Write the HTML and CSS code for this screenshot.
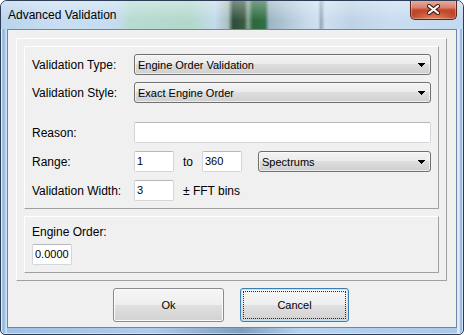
FILE: index.html
```html
<!DOCTYPE html>
<html lang="en">
<head>
    <meta charset="UTF-8">
    <meta name="viewport" content="width=device-width, initial-scale=1.0">
    <title>Advanced Validation</title>
    <link rel="stylesheet" href="styles.css">
</head>
<body>

    <div class="window">
        <div class="titlebar">
            <span class="title">Advanced Validation</span>
            <span class="close">
                <svg width="13" height="11" viewBox="0 0 13 11">
                    <path d="M2 2 L11 9 M11 2 L2 9" stroke="#4a2018" stroke-width="4.2" stroke-linecap="round"/>
                    <path d="M2 2 L11 9 M11 2 L2 9" stroke="#ffffff" stroke-width="2.2" stroke-linecap="round"/>
                </svg>
            </span>
        </div>

        <div class="client">
            <div class="panel">
                <div class="group">
                    <div class="row">
                        <span class="label">Validation Type:</span>
                        <span class="combo"><span class="value">Engine Order Validation</span><svg class="arrow" width="7" height="4" viewBox="0 0 7 4"><path d="M0 0h7v1h-1v1h-1v1h-1v1h-1v-1h-1v-1h-1v-1h-1z"/></svg></span>
                    </div>
                    <div class="row near">
                        <span class="label">Validation Style:</span>
                        <span class="combo"><span class="value">Exact Engine Order</span><svg class="arrow" width="7" height="4" viewBox="0 0 7 4"><path d="M0 0h7v1h-1v1h-1v1h-1v1h-1v-1h-1v-1h-1v-1h-1z"/></svg></span>
                    </div>
                    <div class="row far">
                        <span class="label">Reason:</span>
                        <span class="edit wide"></span>
                    </div>
                    <div class="row">
                        <span class="label">Range:</span>
                        <span class="edit">1</span>
                        <span class="to">to</span>
                        <span class="edit">360</span>
                        <span class="combo spectrums"><span class="value">Spectrums</span><svg class="arrow" width="7" height="4" viewBox="0 0 7 4"><path d="M0 0h7v1h-1v1h-1v1h-1v1h-1v-1h-1v-1h-1v-1h-1z"/></svg></span>
                    </div>
                    <div class="row">
                        <span class="label">Validation Width:</span>
                        <span class="edit">3</span>
                        <span class="unit">± FFT bins</span>
                    </div>
                </div>

                <div class="group order">
                    <div class="caption">Engine Order:</div>
                    <span class="edit">0.0000</span>
                </div>
            </div>

            <div class="buttons">
                <button class="btn ok">Ok</button>
                <button class="btn cancel">Cancel</button>
            </div>
        </div>
    </div>

</body>
</html>
```

FILE: styles.css
```css
body {
    margin: 0;
    background: #ffffff;
    font-family: "Liberation Sans", Arial, sans-serif;
}
.window {
    width: 464px;
    height: 335px;
    box-sizing: border-box;
    border: 1px solid #2c3d55;
    border-radius: 7px 7px 5px 5px;
    overflow: hidden;
    display: flex;
    flex-direction: column;
    background:
        linear-gradient(to right, #dbe9f7 0, #8fb5df 2px, #a6c6ea 4px, #d3e4f5 5px, #c3daf1 6px,
            transparent 6px, transparent calc(100% - 6px),
            #d8e7f6 calc(100% - 6px), #e6eff9 calc(100% - 4px), #8ab2e2 calc(100% - 2px), #b8d2ef 100%),
        linear-gradient(to right, #9fc1e6 0, #aecbeb 150px, #7f9fc0 240px, #b7d2ee 300px, #a9c8ea 100%);
    box-shadow: inset 0 0 0 1px rgba(255, 255, 255, 0.45);
}
.titlebar {
    height: 28px;
    flex: none;
    display: flex;
    align-items: center;
    padding-left: 7px;
    background:
        linear-gradient(to bottom, rgba(255, 255, 255, 0.35), rgba(255, 255, 255, 0) 70%),
        linear-gradient(to right, #b9d4ee 0, #c9def2 60px, #c5dcf0 115px, #b6dbd2 130px,
            #b2d8cc 190px, #c3dbec 214px, #a9bfc0 227px, #2f4e3a 232px, #3b5a44 243px,
            #88a697 247px, #2c693d 252px, #307044 264px, #9bb4c4 268px, #b7cbdc 290px,
            #c6d9ea 305px, #cfe0f0 317px, #97a8b8 320px, #cde0f0 324px, #bed3e6 350px,
            #c9ddf0 390px, #c3d9ef 100%);
}
.title {
    font-size: 12px;
    color: #000000;
    padding-bottom: 1px;
}
.close {
    margin-left: auto;
    margin-right: 6px;
    margin-top: -1px;
    align-self: flex-start;
    width: 47px;
    height: 20px;
    box-sizing: border-box;
    border: 1px solid #5b2419;
    border-top: none;
    border-radius: 0 0 5px 5px;
    display: flex;
    align-items: center;
    justify-content: center;
    background:
        radial-gradient(ellipse 60% 45% at 50% 100%, rgba(255, 170, 120, 0.7), rgba(255, 170, 120, 0)),
        linear-gradient(to bottom, #e9b1a4 0, #d9806f 40%, #c5492f 52%, #b3391f 100%);
    box-shadow: inset 0 0 0 1px rgba(255, 255, 255, 0.3);
}
.client {
    flex: 1;
    margin: 0 6px 6px;
    border: 1px solid #6f86a3;
    background: #f0f0f0;
}
.panel {
    margin: 8px 9px 0 8px;
    padding: 7px;
    border: 1px solid;
    border-color: #ffffff #a0a0a0 #a0a0a0 #ffffff;
}
.group {
    padding: 7px;
    border: 1px solid;
    border-color: #ffffff #a0a0a0 #a0a0a0 #ffffff;
}
.group.order {
    margin-top: 7px;
}
.row {
    display: flex;
    align-items: center;
    height: 21px;
    margin-top: 8px;
}
.row:first-child {
    margin-top: 0;
}
.row.near {
    margin-top: 7px;
}
.row.far {
    margin-top: 19px;
}
.label,
.to,
.unit,
.caption {
    font-size: 12px;
    color: #000000;
}
.label {
    width: 102px;
    flex: none;
}
.to {
    width: 28px;
    padding-left: 9px;
    box-sizing: border-box;
}
.unit {
    margin-left: 9px;
}
.caption {
    height: 16px;
    line-height: 16px;
    margin-bottom: 4px;
}
.edit {
    display: block;
    width: 40px;
    height: 21px;
    box-sizing: border-box;
    padding: 0 2px;
    border: 1px solid #d3d7dc;
    border-top-color: #b5b9bf;
    border-radius: 2px;
    background: #ffffff;
    font-size: 11px;
    line-height: 19px;
    color: #000000;
}
.edit.wide {
    flex: 1;
}
.combo {
    flex: 1;
    height: 21px;
    box-sizing: border-box;
    display: flex;
    align-items: center;
    padding-left: 3px;
    padding-right: 5px;
    border: 1px solid #707070;
    border-radius: 3px;
    background: linear-gradient(to bottom, #f3f3f3 0, #ebebeb 50%, #dddddd 50%, #cfcfcf 100%);
    box-shadow: inset 0 0 0 1px rgba(255, 255, 255, 0.6);
    font-size: 11px;
    color: #000000;
}
.combo.spectrums {
    margin-left: 16px;
}
.combo .value {
    flex: 1;
}
.combo .arrow {
    display: block;
    fill: #000000;
}
.buttons {
    display: flex;
    gap: 16px;
    padding-left: 105px;
    margin-top: 7px;
}
.btn {
    position: relative;
    height: 34px;
    padding: 0;
    border: 1px solid #8a8a8a;
    border-radius: 3px;
    background: linear-gradient(to bottom, #f6f6f6 0, #eeeeee 50%, #e0e0e0 50%, #d2d2d2 100%);
    box-shadow: inset 0 0 0 1px #fcfcfc;
    font-family: "Liberation Sans", Arial, sans-serif;
    font-size: 11px;
    color: #000000;
}
.btn.ok {
    width: 111px;
}
.btn.cancel {
    width: 109px;
    border-color: #3c7fb1;
    box-shadow: inset 0 0 0 1px #bfe4f6;
}
.btn.cancel::after {
    content: "";
    position: absolute;
    inset: 2px;
    border: 1px dotted #2a2a2a;
}
```
